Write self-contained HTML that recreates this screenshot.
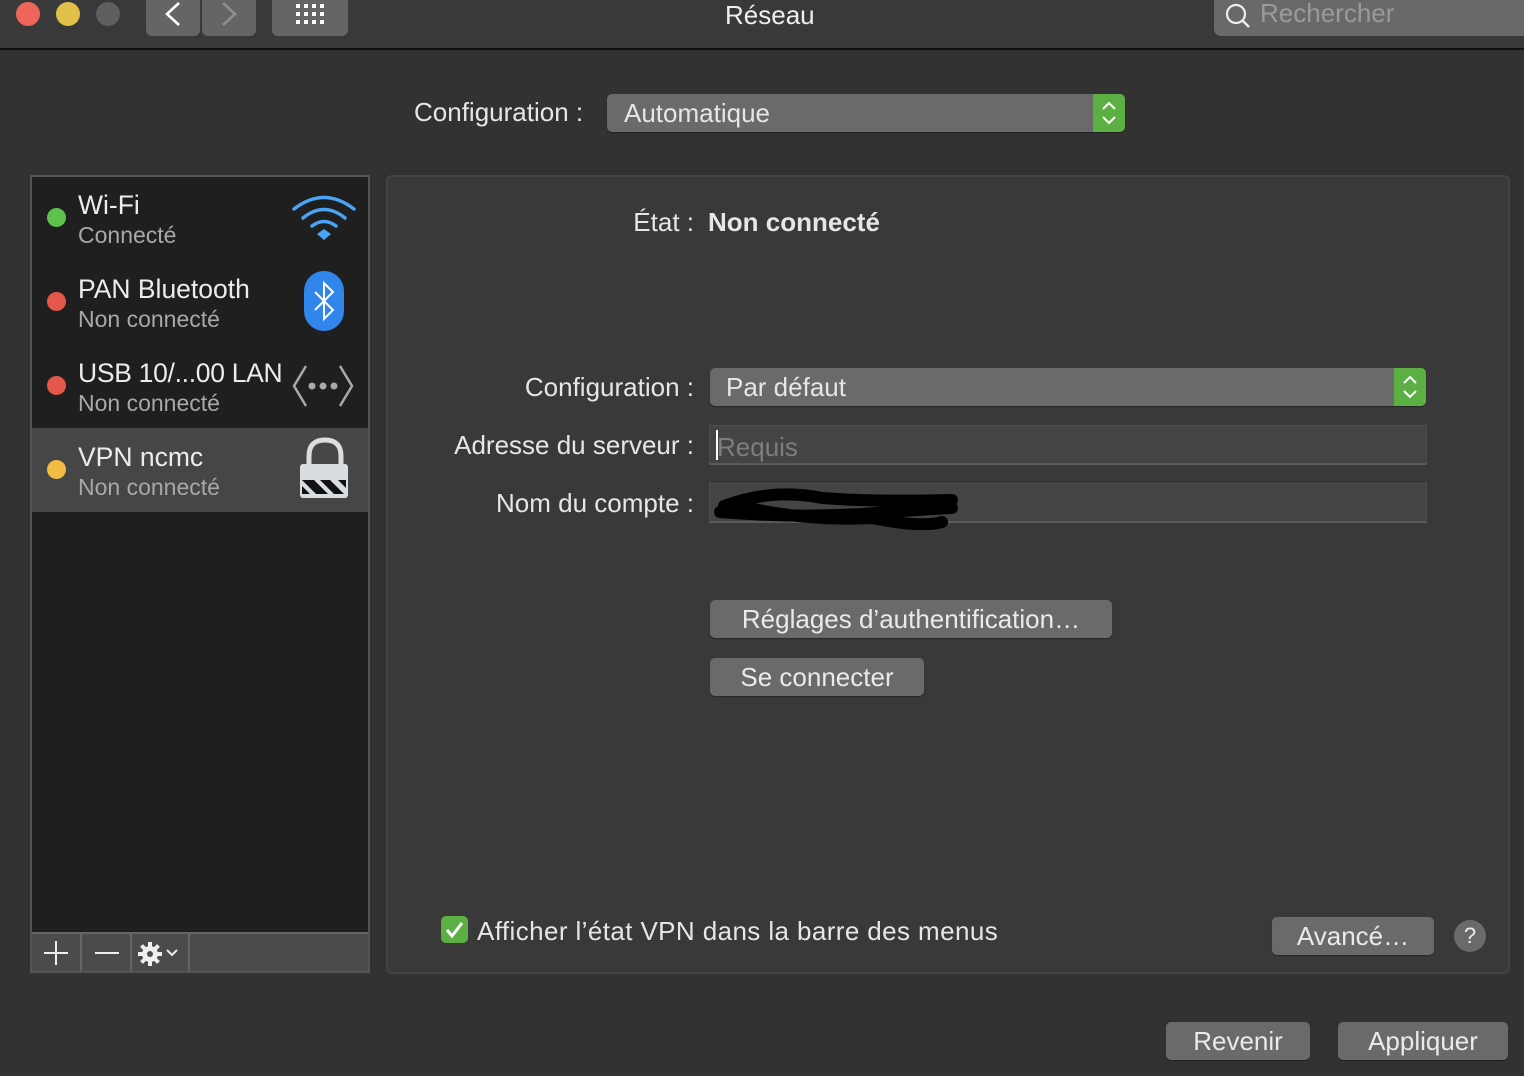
<!DOCTYPE html>
<html><head><meta charset="utf-8">
<style>
*{margin:0;padding:0;box-sizing:border-box}
body{width:1524px;height:1076px;background:#323232;font-family:"Liberation Sans",sans-serif;color:#e6e6e6;position:relative;overflow:hidden}
.a{position:absolute}
.t{font-size:26px;white-space:nowrap;line-height:1}
.r{position:absolute;right:830px;font-size:26px;white-space:nowrap;line-height:1}
.btn{position:absolute;background:#6a6a6a;border-radius:5px;box-shadow:0 1px 1px rgba(0,0,0,.35);color:#eaeaea;font-size:26px;text-align:center;white-space:nowrap}
.sel{position:absolute;background:#6a6a6a;border-radius:5px;box-shadow:0 1px 1px rgba(0,0,0,.35)}
.arr{position:absolute;right:0;top:0;bottom:0;width:32px;background:#5cb043;border-radius:0 5px 5px 0}
.dot{position:absolute;width:19px;height:19px;border-radius:50%}
.name{position:absolute;font-size:26.5px;color:#ececec;white-space:nowrap}
.sub{position:absolute;font-size:23px;color:#a8a8a8;white-space:nowrap}
.field{position:absolute;background:#444;border:1px solid #4e4e4e;border-bottom:2px solid #5a5a5a}
</style></head><body>
<div class="a" style="left:0;top:0;width:1524px;height:50px;background:#393939;border-bottom:2px solid #111"></div>
<div class="dot" style="left:16px;top:2px;width:24px;height:24px;background:#ee6559"></div>
<div class="dot" style="left:56px;top:2px;width:24px;height:24px;background:#e1c04a"></div>
<div class="dot" style="left:96px;top:2px;width:24px;height:24px;background:#5f5f5f"></div>
<div class="a" style="left:146px;top:0;width:54px;height:36px;background:#656565;border-radius:0 0 6px 6px"></div>
<div class="a" style="left:202px;top:0;width:54px;height:36px;background:#656565;border-radius:0 0 6px 6px"></div>
<svg class="a" style="left:146px;top:0" width="110" height="36"><path d="M33 3 L21 14 L33 25" stroke="#fff" stroke-width="2.6" fill="none"/><path d="M77 3 L89 14 L77 25" stroke="#8e8e8e" stroke-width="2.6" fill="none"/></svg>
<div class="a" style="left:272px;top:0;width:76px;height:36px;background:#656565;border-radius:0 0 6px 6px"></div>
<svg class="a" style="left:294px;top:4px" width="32" height="22"><g fill="#fff"><rect x="2" y="0" width="4" height="4"/><rect x="10" y="0" width="4" height="4"/><rect x="18" y="0" width="4" height="4"/><rect x="26" y="0" width="4" height="4"/><rect x="2" y="8" width="4" height="4"/><rect x="10" y="8" width="4" height="4"/><rect x="18" y="8" width="4" height="4"/><rect x="26" y="8" width="4" height="4"/><rect x="2" y="16" width="4" height="4"/><rect x="10" y="16" width="4" height="4"/><rect x="18" y="16" width="4" height="4"/><rect x="26" y="16" width="4" height="4"/></g></svg>
<div class="a t" style="left:725px;top:2px;color:#eee">Réseau</div>
<div class="a" style="left:1214px;top:0;width:320px;height:36px;background:#696969;border-radius:0 0 0 7px"></div>
<svg class="a" style="left:1224px;top:2px" width="30" height="28"><circle cx="12" cy="12" r="9" stroke="#eee" stroke-width="2.2" fill="none"/><path d="M18.5 18.5 L25 25" stroke="#eee" stroke-width="2.4"/></svg>
<div class="a t" style="left:1260px;top:0px;color:#9a9a9a">Rechercher</div>

<div class="a t" style="left:414px;top:99px">Configuration :</div>
<div class="sel" style="left:607px;top:94px;width:518px;height:38px"><div class="a t" style="left:17px;top:6px">Automatique</div><div class="arr"><svg width="32" height="38"><path d="M10 15 L16 9 L22 15 M10 23 L16 29 L22 23" stroke="#fff" stroke-width="2" fill="none"/></svg></div></div>

<div class="a" style="left:30px;top:175px;width:340px;height:798px;background:#1f1f1f;border:2px solid #555"></div>
<div class="a" style="left:32px;top:428px;width:336px;height:84px;background:#464646"></div>
<div class="dot" style="left:47px;top:208px;background:#5ec24e"></div>
<div class="name" style="left:78px;top:190px">Wi-Fi</div><div class="sub" style="left:78px;top:222px">Connecté</div>
<div class="dot" style="left:47px;top:292px;background:#e5574b"></div>
<div class="name" style="left:78px;top:274px">PAN Bluetooth</div><div class="sub" style="left:78px;top:306px">Non connecté</div>
<div class="dot" style="left:47px;top:376px;background:#e5574b"></div>
<div class="name" style="left:78px;top:358px;letter-spacing:-0.3px">USB 10/...00 LAN</div><div class="sub" style="left:78px;top:390px">Non connecté</div>
<div class="dot" style="left:47px;top:460px;background:#f2bc44"></div>
<div class="name" style="left:78px;top:442px">VPN ncmc</div><div class="sub" style="left:78px;top:474px">Non connecté</div>
<svg class="a" style="left:290px;top:192px" width="70" height="52"><g stroke="#4aa3f5" stroke-width="3.5" fill="none" stroke-linecap="round"><path d="M4 17 Q34 -6 64 17"/><path d="M13 26 Q34 9 55 26"/><path d="M22 34 Q34 25 46 34"/></g><path d="M27 42 L34 37 L41 42 L34 48 Z" fill="#4aa3f5"/></svg>
<svg class="a" style="left:302px;top:270px" width="44" height="62"><rect x="2" y="1" width="40" height="60" rx="20" fill="#3186ec"/><path d="M13 22 L31 40 L22 49 L22 13 L31 22 L13 40" stroke="#fff" stroke-width="2" fill="none"/></svg>
<svg class="a" style="left:290px;top:362px" width="68" height="50"><g stroke="#a9a9a9" stroke-width="2.5" fill="none"><path d="M16 4 L4 24 L16 44"/><path d="M50 4 L62 24 L50 44"/></g><g fill="#a9a9a9"><circle cx="22" cy="24" r="3.5"/><circle cx="33" cy="24" r="3.5"/><circle cx="44" cy="24" r="3.5"/></g></svg>
<svg class="a" style="left:298px;top:436px" width="54" height="66"><path d="M11 30 V20 Q11 4 27 4 Q43 4 43 20 V30" stroke="#ddd" stroke-width="5" fill="none"/><rect x="2" y="28" width="48" height="34" rx="3" fill="#d8dde2"/><path d="M4 44 L16 44 L30 58 L18 58Z M22 44 L32 44 L46 58 L36 58Z M40 44 L48 44 L48 52Z M4 50 L12 58 L4 58Z" fill="#111"/></svg>
<div class="a" style="left:32px;top:932px;width:336px;height:39px;background:#4b4b4b;border-top:2px solid #666"></div>
<div class="a" style="left:80px;top:934px;width:2px;height:37px;background:#666"></div>
<div class="a" style="left:130px;top:934px;width:2px;height:37px;background:#666"></div>
<div class="a" style="left:188px;top:934px;width:2px;height:37px;background:#666"></div>
<svg class="a" style="left:32px;top:934px" width="160" height="37"><g stroke="#eee" stroke-width="2"><path d="M24 7 V31 M12 19 H36"/><path d="M63 19 H87"/></g><g transform="translate(118 20)" fill="#eee"><circle r="8"/><g stroke="#eee" stroke-width="4"><path d="M0 -12 V12 M-12 0 H12 M-8.5 -8.5 L8.5 8.5 M-8.5 8.5 L8.5 -8.5"/></g><circle r="3" fill="#4b4b4b"/></g><path d="M135 16 L140 21 L145 16" stroke="#eee" stroke-width="2" fill="none"/></svg>

<div class="a" style="left:386px;top:175px;width:1124px;height:799px;background:#393939;border:2px solid #444;border-radius:6px"></div>
<div class="r" style="top:209px">État :</div>
<div class="a t" style="left:708px;top:209px;font-weight:bold">Non connecté</div>
<div class="r" style="top:374px">Configuration :</div>
<div class="sel" style="left:710px;top:368px;width:716px;height:38px"><div class="a t" style="left:16px;top:6px">Par défaut</div><div class="arr"><svg width="32" height="38"><path d="M10 15 L16 9 L22 15 M10 23 L16 29 L22 23" stroke="#fff" stroke-width="2" fill="none"/></svg></div></div>
<div class="r" style="top:432px">Adresse du serveur :</div>
<div class="field" style="left:709px;top:425px;width:718px;height:40px"><div class="a" style="left:6px;top:4px;width:2px;height:30px;background:#fff"></div><div class="a t" style="left:7px;top:8px;color:#7e7e7e">Requis</div></div>
<div class="r" style="top:490px">Nom du compte :</div>
<div class="field" style="left:709px;top:483px;width:718px;height:40px"></div>
<svg class="a" style="left:712px;top:484px" width="260" height="46"><path d="M12 22 Q60 4 110 14 Q160 18 240 16 M8 28 Q80 34 150 30 Q200 26 240 24 M20 20 Q90 38 160 34 Q210 44 230 38" stroke="#000" stroke-width="12" fill="none" stroke-linecap="round"/></svg>
<div class="btn" style="left:710px;top:600px;width:402px;height:38px;line-height:38px">Réglages d’authentification…</div>
<div class="btn" style="left:710px;top:658px;width:214px;height:38px;line-height:38px">Se connecter</div>
<div class="a" style="left:441px;top:916px;width:27px;height:27px;background:#5cb043;border-radius:5px"><svg width="27" height="27"><path d="M6 14 L11 20 L21 7" stroke="#fff" stroke-width="3" fill="none"/></svg></div>
<div class="a t" style="left:477px;top:918px;letter-spacing:0.4px">Afficher l’état VPN dans la barre des menus</div>
<div class="btn" style="left:1272px;top:917px;width:162px;height:38px;line-height:38px">Avancé…</div>
<div class="a" style="left:1454px;top:920px;width:32px;height:32px;border-radius:50%;background:#6a6a6a;text-align:center;line-height:32px;font-size:22px;color:#eee">?</div>
<div class="btn" style="left:1166px;top:1022px;width:144px;height:38px;line-height:38px">Revenir</div>
<div class="btn" style="left:1338px;top:1022px;width:170px;height:38px;line-height:38px">Appliquer</div>
</body></html>
